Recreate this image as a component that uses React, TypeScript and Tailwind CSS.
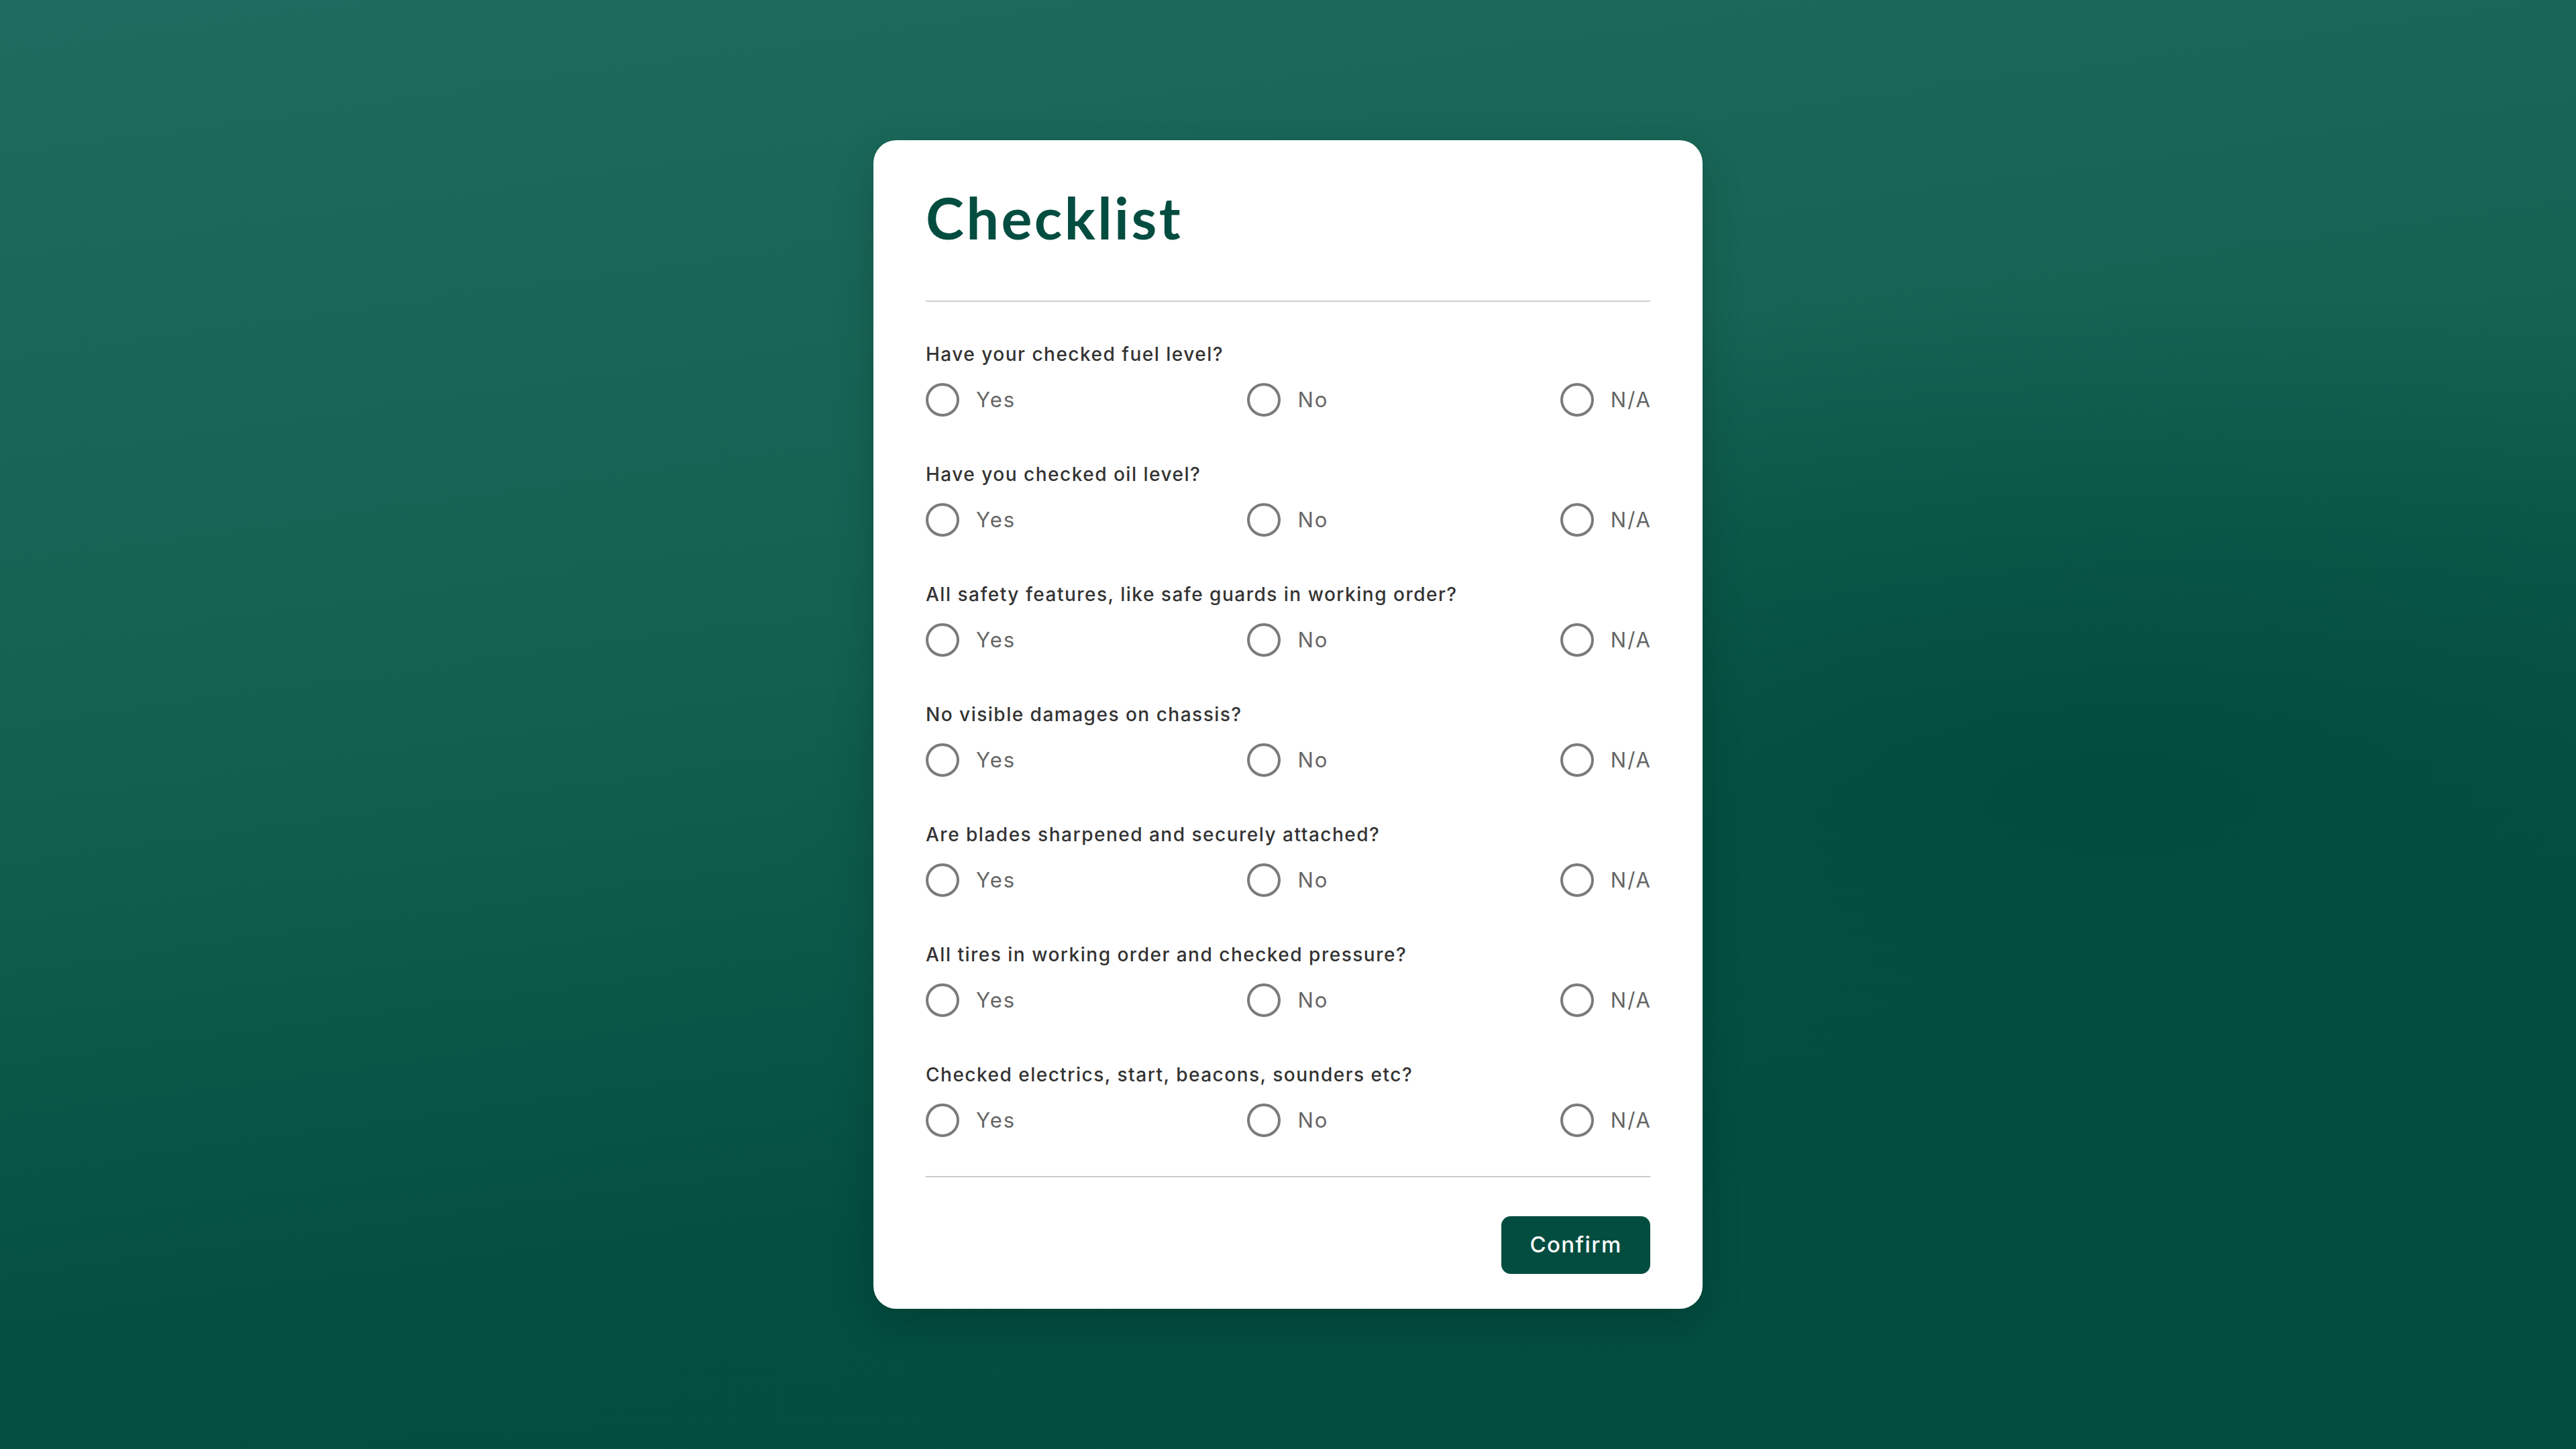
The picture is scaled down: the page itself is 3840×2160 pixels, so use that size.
import { useState } from "react";

const questions = [
  "Have your checked fuel level?",
  "Have you checked oil level?",
  "All safety features, like safe guards in working order?",
  "No visible damages on chassis?",
  "Are blades sharpened and securely attached?",
  "All tires in working order and checked pressure?",
  "Checked electrics, start, beacons, sounders etc?",
];

const options = ["Yes", "No", "N/A"];

export default function App() {
  const [answers, setAnswers] = useState<Record<number, string>>({});

  return (
    <main
      className="flex min-h-screen items-center justify-center bg-[radial-gradient(ellipse_at_82%_55%,#014b3e_0%,rgba(2,76,63,0)_45%),linear-gradient(172deg,#1e6c5f_0%,#11604f_45%,#034e41_75%,#034c40_100%)]"
      style={{ fontFamily: "Inter, Lato, sans-serif" }}
    >
      <div className="w-[1236px] rounded-[34px] bg-white px-[78px] pt-[72px] pb-[52px] shadow-[0_20px_60px_rgba(0,0,0,0.18)]">
        <h1
          className="text-[86px] leading-none font-bold tracking-[3.5px] text-[#024d40]"
          style={{ fontFamily: "Lato, sans-serif" }}
        >
          Checklist
        </h1>

        <div className="mt-[81px] h-[2px] bg-[#cccccc]" />

        <div className="flex flex-col gap-[68px] pt-[60px] pb-[58px]">
          {questions.map((q, i) => (
            <div key={i}>
              <p className="text-[28px] leading-[36px] font-medium tracking-[1.5px] text-[#333333]">
                {q}
              </p>
              <div className="mt-[25px] flex h-[50px] items-center justify-between">
                {options.map((opt) => (
                  <button
                    key={opt}
                    onClick={() => setAnswers({ ...answers, [i]: opt })}
                    className="flex items-center gap-[25px]"
                  >
                    <span className="flex h-[50px] w-[50px] items-center justify-center rounded-full border-[4px] border-[#7b7b7b]">
                      {answers[i] === opt && (
                        <span className="h-[24px] w-[24px] rounded-full bg-[#024d40]" />
                      )}
                    </span>
                    <span className="-mr-[2px] text-[31px] tracking-[2px] text-[#666666]">
                      {opt}
                    </span>
                  </button>
                ))}
              </div>
            </div>
          ))}
        </div>

        <div className="h-[2px] bg-[#cccccc]" />

        <div className="mt-[58px] flex justify-end">
          <button className="h-[86px] w-[222px] rounded-[14px] bg-[#024d40] text-[33px] font-medium tracking-[1.4px] text-white">
            Confirm
          </button>
        </div>
      </div>
    </main>
  );
}
